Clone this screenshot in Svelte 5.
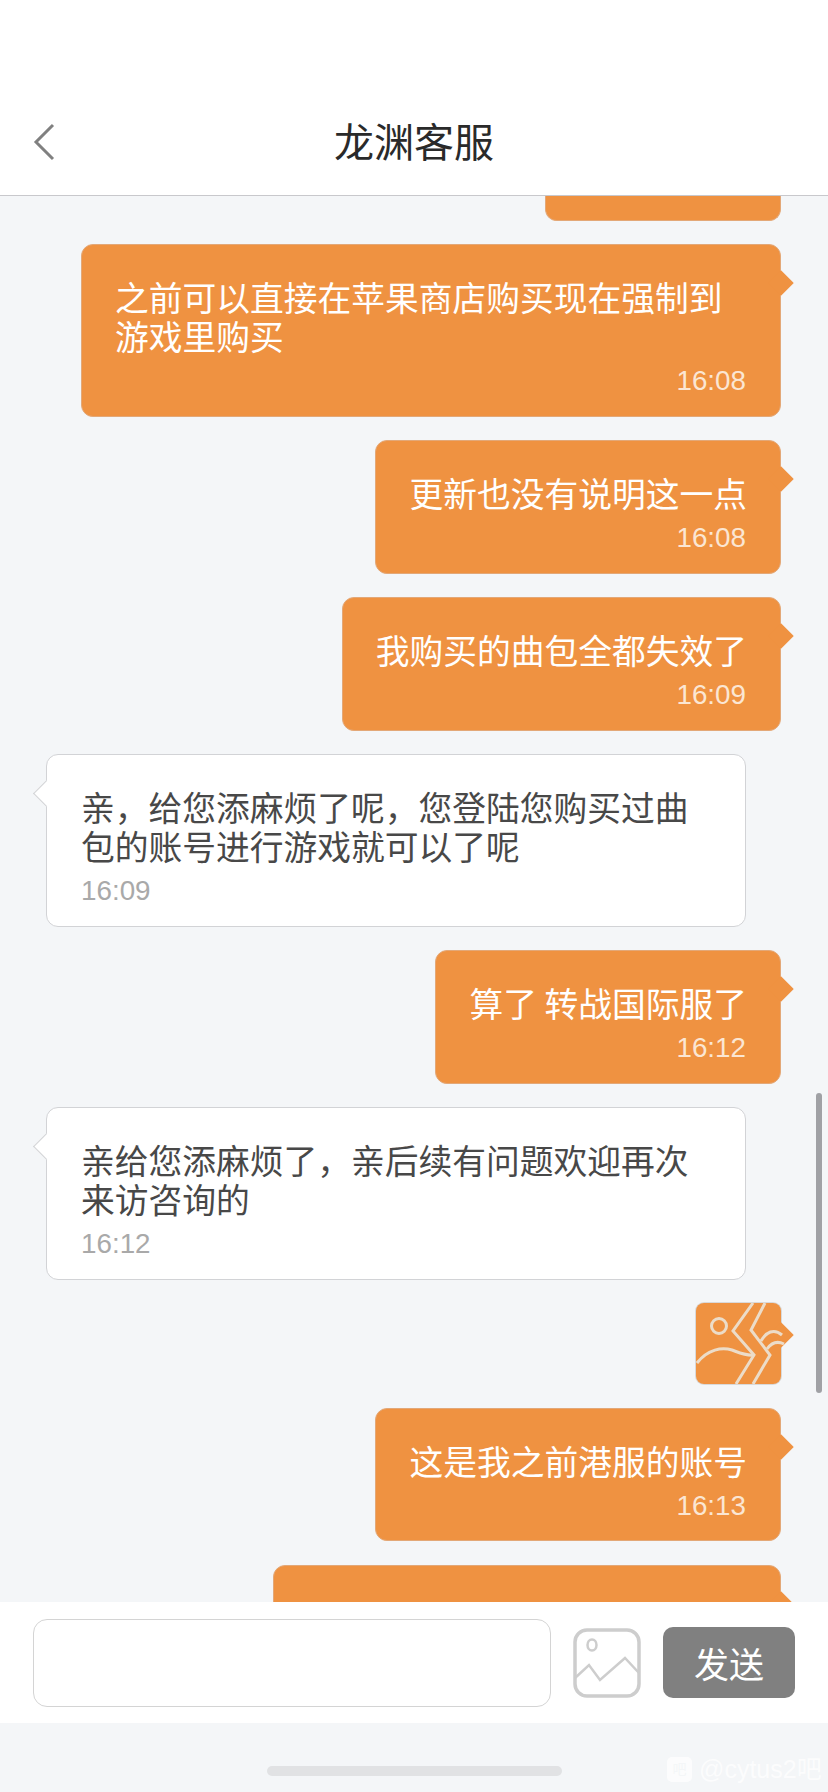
<script>
  const messages = [
    { side: 'right', cut: true, width: 236 },
    { side: 'right', text: '之前可以直接在苹果商店购买现在强制到游戏里购买', time: '16:08' },
    { side: 'right', text: '更新也没有说明这一点', time: '16:08' },
    { side: 'right', text: '我购买的曲包全都失效了', time: '16:09' },
    { side: 'left', text: '亲，给您添麻烦了呢，您登陆您购买过曲包的账号进行游戏就可以了呢', time: '16:09' },
    { side: 'right', text: '算了 转战国际服了', time: '16:12' },
    { side: 'left', text: '亲给您添麻烦了，亲后续有问题欢迎再次来访咨询的', time: '16:12' },
    { side: 'right', image: true },
    { side: 'right', text: '这是我之前港服的账号', time: '16:13' },
    { side: 'right', text: '', width: 508 }
  ];
</script>

<div class="page">
  <header class="topbar">
    <svg class="back" width="22" height="38" viewBox="0 0 22 38">
      <path d="M20 2 L3 19 L20 36" fill="none" stroke="#808080" stroke-width="3" />
    </svg>
    <h1>龙渊客服</h1>
  </header>

  <main class="chat">
    <div class="list">
      {#each messages as m}
        {#if m.image}
          <div class="pic">
            <svg width="98" height="81" viewBox="0 0 98 81">
              <g fill="none" stroke="#ecdcc8" stroke-width="3">
                <circle cx="23" cy="23" r="7.5" />
                <path d="M1 60 C12 46 26 44 36 47 C44 50 50 53 58 52" />
                <path d="M57 0 L37 28 L58 52 L40 81" />
                <path d="M69 0 L55 27 L74 52 L57 81" />
                <path d="M65 38 C70 29 78 25 86 32" />
                <path d="M71 46 C76 39 82 38 88 41" />
              </g>
            </svg>
          </div>
        {:else if m.cut}
          <div class="bubble right cut" style="width: {m.width}px"></div>
        {:else}
          <div class="bubble {m.side}" style={m.width ? `width: ${m.width}px; height: 173px` : ''}>
            <p>{m.text}</p>
            {#if m.time}<time>{m.time}</time>{/if}
          </div>
        {/if}
      {/each}
    </div>
    <div class="scrollbar"></div>
  </main>

  <footer class="composer">
    <div class="input"></div>
    <svg class="picker" width="68" height="70" viewBox="0 0 68 70">
      <rect x="2" y="2" width="64" height="66" rx="12" fill="none" stroke="#cdcdcd" stroke-width="3.5" />
      <ellipse cx="19" cy="17" rx="4.5" ry="5.5" fill="none" stroke="#cdcdcd" stroke-width="2.5" />
      <path d="M2 50 L16 37 L27 52 L52 30 L66 45" fill="none" stroke="#cdcdcd" stroke-width="2.5" />
    </svg>
    <button>发送</button>
  </footer>

  <div class="bottom">
    <div class="home"></div>
    <div class="mark"><span class="logo">吧</span><span>@cytus2吧</span></div>
  </div>
</div>

<style>
  :global(body) {
    background: #f4f6f8;
    font-family: "Noto Sans CJK SC", sans-serif;
  }

  .page {
    width: 828px;
    height: 1792px;
    display: flex;
    flex-direction: column;
    overflow: hidden;
    position: relative;
  }

  .topbar {
    flex: none;
    height: 196px;
    box-sizing: border-box;
    background: #fff;
    border-bottom: 1px solid #c8c8cc;
    display: flex;
    justify-content: center;
    align-items: flex-end;
    padding-bottom: 30px;
    position: relative;
  }

  .back {
    position: absolute;
    left: 33px;
    top: 123px;
  }

  h1 {
    margin: 0;
    font-size: 40px;
    font-weight: 400;
    line-height: 50px;
    color: #2a2a2a;
  }

  .chat {
    flex: 1;
    min-height: 0;
    overflow: hidden;
    position: relative;
  }

  .list {
    display: flex;
    flex-direction: column;
    gap: 23.4px;
  }

  .bubble {
    position: relative;
    box-sizing: border-box;
    max-width: 700px;
    border-radius: 12px;
    padding: 32px 33px 14.6px;
    font-size: 33.75px;
    line-height: 39px;
    flex: none;
  }

  .bubble p {
    margin: 0;
  }

  .bubble time {
    display: block;
    margin-top: 6px;
    font-family: "Liberation Sans", sans-serif;
    font-size: 27.8px;
    line-height: 40px;
  }

  .right {
    align-self: flex-end;
    margin-right: 47px;
    background: #ef9241;
    border: 1px solid #e3a878;
    color: #fff;
  }

  .right time {
    text-align: right;
    margin-right: 1px;
    color: #fbe6d3;
  }

  .left {
    align-self: flex-start;
    margin-left: 46px;
    padding-left: 34px;
    width: 700px;
    background: #fff;
    border: 1px solid #d2d3d6;
    color: #484848;
  }

  .left time {
    color: #a9a9a9;
  }

  .bubble:not(.cut)::after {
    content: "";
    position: absolute;
    top: 29px;
    width: 18px;
    height: 18px;
    transform: rotate(45deg);
  }

  .right:not(.cut)::after {
    right: -10px;
    background: #ef9241;
  }

  .left::after {
    left: -10px;
    background: #fff;
    border-left: 1px solid #d2d3d6;
    border-bottom: 1px solid #d2d3d6;
  }

  .cut {
    height: 25px;
    padding: 0;
    border-top: none;
    border-radius: 0 0 12px 12px;
  }

  .pic {
    align-self: flex-end;
    margin-right: 47px;
    width: 85px;
    height: 81px;
    flex: none;
    position: relative;
    background: #ef9241;
    border-radius: 8px;
    box-shadow: 0 0 0 1px #d9d9d9;
  }

  .pic svg {
    display: block;
    position: relative;
    z-index: 1;
  }

  .pic::after {
    content: "";
    position: absolute;
    top: 23px;
    right: -9px;
    width: 18px;
    height: 18px;
    background: #ef9241;
    transform: rotate(45deg);
  }

  .scrollbar {
    position: absolute;
    left: 816px;
    top: 897px;
    width: 6px;
    height: 300px;
    border-radius: 3px;
    background: #a0a1a5;
  }

  .composer {
    height: 121px;
    flex: none;
    background: #fff;
    display: flex;
    align-items: center;
    padding: 0 33px;
    box-sizing: border-box;
  }

  .input {
    width: 518px;
    height: 88px;
    box-sizing: border-box;
    border: 1px solid #d4d4d4;
    border-radius: 14px;
    margin-right: 22px;
  }

  .picker {
    flex: none;
    margin-right: 22px;
  }

  button {
    width: 132px;
    height: 71px;
    border: none;
    border-radius: 10px;
    background: #808080;
    color: #fff;
    font-family: inherit;
    font-size: 35px;
    padding: 0;
  }

  .bottom {
    height: 69px;
    flex: none;
    position: relative;
    display: flex;
    justify-content: center;
    padding-top: 43px;
    box-sizing: border-box;
  }

  .home {
    width: 295px;
    height: 10px;
    border-radius: 5px;
    background: #e1e2e4;
  }

  .mark {
    position: absolute;
    left: 667px;
    top: 34px;
    display: flex;
    align-items: center;
    gap: 7px;
    color: #fff;
    opacity: 0.75;
    font-family: "Liberation Sans", "Noto Sans CJK SC", sans-serif;
    font-size: 25px;
    line-height: 25px;
  }

  .logo {
    width: 25px;
    height: 25px;
    border-radius: 5px;
    background: #fff;
    color: #f4f6f8;
    font-size: 14px;
    text-align: center;
  }
</style>
